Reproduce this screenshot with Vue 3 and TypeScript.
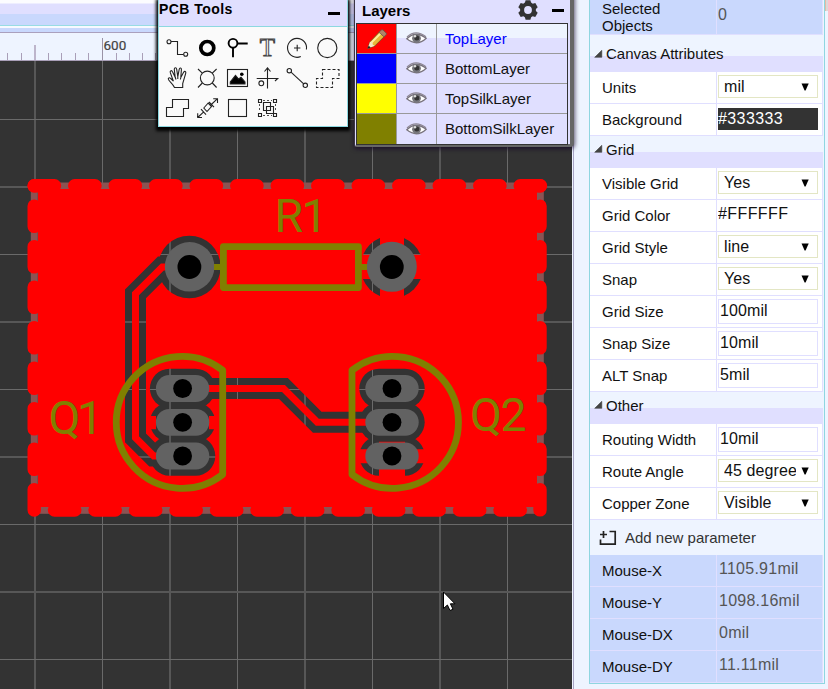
<script setup lang="ts">
type Row = {
  kind: 'select' | 'input' | 'color' | 'dark'
  label: string
  value: string
}
type Section = { title: string; tall?: boolean; rows: Row[] }

const sections: Section[] = [
  {
    title: 'Canvas Attributes',
    tall: true,
    rows: [
      { kind: 'select', label: 'Units', value: 'mil' },
      { kind: 'dark', label: 'Background', value: '#333333' },
    ],
  },
  {
    title: 'Grid',
    rows: [
      { kind: 'select', label: 'Visible Grid', value: 'Yes' },
      { kind: 'color', label: 'Grid Color', value: '#FFFFFF' },
      { kind: 'select', label: 'Grid Style', value: 'line' },
      { kind: 'select', label: 'Snap', value: 'Yes' },
      { kind: 'input', label: 'Grid Size', value: '100mil' },
      { kind: 'input', label: 'Snap Size', value: '10mil' },
      { kind: 'input', label: 'ALT Snap', value: '5mil' },
    ],
  },
  {
    title: 'Other',
    rows: [
      { kind: 'input', label: 'Routing Width', value: '10mil' },
      { kind: 'select', label: 'Route Angle', value: '45 degree' },
      { kind: 'select', label: 'Copper Zone', value: 'Visible' },
    ],
  },
]

const mouse = [
  { label: 'Mouse-X', value: '1105.91mil' },
  { label: 'Mouse-Y', value: '1098.16mil' },
  { label: 'Mouse-DX', value: '0mil' },
  { label: 'Mouse-DY', value: '11.11mil' },
]

const layers = [
  { name: 'TopLayer', cls: 'red', active: true },
  { name: 'BottomLayer', cls: 'blue', active: false },
  { name: 'TopSilkLayer', cls: 'yellow', active: false },
  { name: 'BottomSilkLayer', cls: 'olive', active: false },
]

const ticks = [7, 21, 48, 61, 75, 88, 116, 129, 142, 155]
const gridX = [
  { p: 34, w: 2 }, { p: 102, w: 1 }, { p: 169, w: 2 }, { p: 237, w: 1 },
  { p: 304, w: 2 }, { p: 372, w: 1 }, { p: 439, w: 2 }, { p: 507, w: 1 },
]
const gridY = [
  { p: 119, w: 1 }, { p: 186, w: 2 }, { p: 254, w: 1 }, { p: 321, w: 2 }, { p: 389, w: 1 },
  { p: 456, w: 2 }, { p: 524, w: 1 }, { p: 591, w: 2 }, { p: 659, w: 1 },
]
const padY = [388.5, 422.3, 456]
const padX = [182.6, 392]
const traces = [
  'M189 267H162.3L135.5 293.8V437.8L153.7 456H182',
  'M182 388.5H283.5L317.3 422.3H392',
]
</script>

<template>
  <main class="app">
    <section class="editor">
      <div class="strip-a"></div>
      <div class="strip-b"></div>
      <div class="strip-c"></div>
      <div class="strip-d"></div>
      <svg class="ruler" width="572" height="28" viewBox="0 33 572 28" shape-rendering="crispEdges">
        <rect v-for="t in ticks" :key="t" :x="t" y="53" width="1" height="7" fill="#a99fb8" />
        <rect x="34" y="45" width="2" height="15" fill="#bdb5cb" />
        <rect x="102" y="38" width="1" height="22" fill="#9a93a6" />
        <rect x="0" y="60" width="572" height="1" fill="#a99fb8" />
        <text class="ruler-text" x="103.5" y="49.5">600</text>
      </svg>
      <svg class="canvas" width="572" height="628" viewBox="0 61 572 628">
        <defs>
          <mask id="copper" maskUnits="userSpaceOnUse" x="0" y="61" width="572" height="628">
            <rect x="38" y="189" width="499" height="318" fill="#fff" />
            <circle cx="189.3" cy="267" r="31.3" fill="#000" />
            <circle cx="391.8" cy="267" r="31.3" fill="#000" />
            <template v-for="x in padX" :key="x">
              <rect v-for="y in padY" :key="y" :x="x - 32.7" :y="y - 19.7" width="65.4" height="39.4" rx="19.7" fill="#000" />
            </template>
            <path v-for="t in traces" :key="t" :d="t" fill="none" stroke="#000" stroke-width="21" />
            <path v-for="t in traces" :key="'w' + t" :d="t" fill="none" stroke="#fff" stroke-width="7" />
            <path d="M380 234H404V300H380ZM358 254.7H426V279H358ZM149 416H156V429.3H149ZM209 416H217V429.3H209ZM358 449.3H427V463.3H358ZM379 441.7H405V443H379ZM379 468H405V477H379Z" fill="#fff" />
          </mask>
        </defs>
        <rect x="0" y="61" width="572" height="628" fill="#333" />
        <g shape-rendering="crispEdges">
          <rect v-for="g in gridX" :key="g.p" :x="g.p" y="61" :width="g.w" height="628" :fill="g.w === 1 ? '#6a6a6a' : '#575757'" />
          <rect v-for="g in gridY" :key="g.p" x="0" :y="g.p" width="572" :height="g.w" :fill="g.w === 1 ? '#6a6a6a' : '#575757'" />
        </g>
        <rect x="34.3" y="186" width="506" height="324.3" fill="none" stroke="#8b5353" stroke-width="7" />
        <rect x="0" y="61" width="572" height="628" fill="#f00" mask="url(#copper)" />
        <g fill="none" stroke="#f00" stroke-width="13.4" stroke-linecap="round" stroke-dasharray="20.3 20.2">
          <path d="M34.2 185.8H540.5" />
          <path d="M34.2 510H540.3M34.2 185.8V510M540 185.8V510" stroke-dashoffset="20.2" />
        </g>
        <g fill="#626262">
          <circle cx="189.6" cy="266.8" r="24.8" />
          <circle cx="391.8" cy="266.8" r="25" />
          <template v-for="x in padX" :key="x">
            <rect v-for="y in padY" :key="y" :x="x - 26.7" :y="y - 13.4" width="53.4" height="26.8" rx="13.4" />
          </template>
        </g>
        <circle cx="189.4" cy="267" r="11.9" />
        <circle cx="391.8" cy="267" r="11.9" />
        <template v-for="x in padX" :key="'h' + x">
          <circle v-for="y in padY" :key="y" :cx="x" :cy="y" r="9.4" />
        </template>
        <g fill="none" stroke="#808000" stroke-width="6.8" stroke-linejoin="round" stroke-linecap="round">
          <rect x="223.4" y="246.6" width="135" height="41" />
          <path d="M222.7 370.2A66 66 0 1 0 222.7 474.5Z" />
          <path d="M352 370.2A66 66 0 1 1 352 474.5Z" />
        </g>
        <path d="M214 264H221V270H214ZM361 264H367V270H361Z" fill="#808000" />
        <g class="silk">
          <text x="274.5 301.5" y="232">R1</text>
          <text x="48.5 77" y="433.5">Q1</text>
          <text x="470 500.5" y="431">Q2</text>
        </g>
        <path d="M443.5 592V608.5L447.4 605L450 610.5L453 609.2L450.4 603.8H455Z" fill="#fff" stroke="#000" />
      </svg>
    </section>

    <aside class="side">
      <div class="props">
        <div class="row selected">
          <div class="name">Selected Objects</div>
          <div class="value muted">0</div>
        </div>
        <template v-for="s in sections" :key="s.title">
          <h3 class="section" :class="{ tall: s.tall }">
            <svg width="9" height="8" viewBox="0 0 9 8"><path d="M7.8 .3V7.3H.7Z" fill="#444" stroke="#444" stroke-width=".6" /></svg>
            <span>{{ s.title }}</span>
          </h3>
          <div v-for="r in s.rows" :key="r.label" class="row">
            <div class="name">{{ r.label }}</div>
            <div class="value">
              <div class="field" :class="r.kind">
                <span>{{ r.value }}</span>
                <svg v-if="r.kind === 'select'" width="8" height="8" viewBox="0 0 8 8"><path d="M.5 .5H7.7L4.6 7.5H3.6Z" /></svg>
              </div>
            </div>
          </div>
        </template>
        <div class="add">
          <svg width="18" height="16" viewBox="0 0 18 16" fill="none" stroke="#222" stroke-width="1.7">
            <path d="M1 4.5H8M4.5 1V8M10.5 1.5H16.2V14.2H1.5V9.5" />
          </svg>
          <span>Add new parameter</span>
        </div>
        <div v-for="m in mouse" :key="m.label" class="row blue-row">
          <div class="name">{{ m.label }}</div>
          <div class="value muted">{{ m.value }}</div>
        </div>
      </div>
      <div class="thumb"></div>
    </aside>

    <section class="tools">
      <header><b>PCB Tools</b><i class="min"></i></header>
      <div class="icons">
        <svg viewBox="0 0 30 30"><circle cx="7" cy="8.7" r="2" /><path d="M9 8.5H15.5V21.5H21.5" /><circle cx="23.7" cy="21.3" r="2" /></svg>
        <svg viewBox="0 0 30 30"><circle cx="15.3" cy="15" r="6.5" stroke-width="3.7" stroke="#000" /></svg>
        <svg viewBox="0 0 30 30"><g stroke-width="1.9" stroke="#000"><circle cx="11" cy="10.3" r="4.4" /><path d="M15.5 10.5H25.7M11 14.8V24.2" /></g></svg>
        <svg viewBox="0 0 30 30"><text class="t-glyph" x="15.5" y="23.3" text-anchor="middle">T</text></svg>
        <svg viewBox="0 0 30 30"><path d="M18.8 23.6A9.5 9.5 0 1 1 24.4 16.5M12 15H18.4M15.2 11.8V18.2" /></svg>
        <svg viewBox="0 0 30 30"><circle cx="15.3" cy="15" r="9.6" /></svg>

        <svg viewBox="0 0 30 30"><path d="M12.5 24.5C10.5 20.5 8.2 19.5 6.6 16.8C5.6 15 7.4 14.1 8.7 15.5L11.4 18.2L8.3 9.7C7.7 7.5 9.7 6.8 10.5 8.8L13.2 14.3L12.3 6.5C12.2 4.2 14.4 4.2 14.7 6.3L15.8 13.7L17.2 6.3C17.7 4.3 19.6 4.8 19.4 6.8L18.8 14.4L21.6 9.2C22.7 7.5 24.3 8.6 23.7 10.3L20.7 20.5V24.5ZM13.2 14.3L14 16.5M15.8 13.7V16M18.8 14.4L18.4 16.5" /></svg>
        <svg viewBox="0 0 30 30"><circle cx="15.3" cy="15" r="6.9" /><path d="M6 6L10.3 10.2M24.6 6L20.3 10.2M6 24.5L10.3 20M24.6 24.5L20.3 20" /></svg>
        <svg viewBox="0 0 30 30"><rect x="5.5" y="6.5" width="20" height="17" /><path d="M8.3 21V19L13.5 12.3L16.6 16L19 14.3L23 19V21Z" fill="#000" /><circle cx="19.8" cy="11.3" r="1.8" fill="#000" stroke="none" /></svg>
        <svg viewBox="0 0 30 30"><path d="M15.5 25.5V5M12.5 8.5L15.5 4.8L18.5 8.5M4.7 15.5H25.7L23 18" /><circle cx="9.3" cy="20.3" r="2.4" /></svg>
        <svg viewBox="0 0 30 30"><circle cx="7.3" cy="7.7" r="2.2" /><path d="M9 9.2L21.7 20.8" /><circle cx="23.3" cy="22.3" r="2.2" /></svg>
        <svg viewBox="0 0 30 30"><path d="M10.5 6.5H27V15.5H20.5V24.5H4.5V15.5H10.5Z" stroke-dasharray="3 2" /></svg>

        <svg viewBox="0 0 30 30"><path d="M10.5 6.5H26.5V15.5H21.5V23.5H4.5V14.5H10.5Z" /></svg>
        <svg viewBox="0 0 30 30"><path d="M5.7 24.5L12 18.7M18.8 12L25.5 5.7M21.2 5.7H25.5V10M5.7 20.2V24.5H10M9 16.2L14 21.7M17 9L22 14.2M11.8 15L16.2 10L19.5 13.5L15 18.5Z" /></svg>
        <svg viewBox="0 0 30 30"><rect x="6.5" y="6.5" width="18" height="17" /></svg>
        <svg viewBox="0 0 30 30"><path d="M6.5 6.5H9.5V9.5H6.5ZM21.5 6.5H24.5V9.5H21.5ZM6.5 20.5H9.5V23.5H6.5ZM21.5 20.5H24.5V23.5H21.5ZM11.5 9.5H18.5V17.5H11.5ZM14.5 13.5H21.5V20.5H14.5Z" /><path d="M11 7.5H20M7.5 11V19M23.5 11V19M11 22.5H20" stroke-dasharray="2 2" stroke-width=".8" /></svg>
      </div>
    </section>

    <section class="layers">
      <header>
        <b>Layers</b>
        <svg class="gear" width="20" height="20" viewBox="-10 -10 20 20">
          <circle r="5.9" fill="none" stroke="#333" stroke-width="4" />
          <g fill="#333">
            <path v-for="a in [0, 60, 120, 180, 240, 300]" :key="a" d="M-3.4 -6.3L-2.4 -9.8H2.4L3.4 -6.3Z" :transform="`rotate(${a})`" />
          </g>
        </svg>
        <i class="min"></i>
      </header>
      <div class="table">
        <div v-for="l in layers" :key="l.name" class="layer" :class="{ active: l.active }">
          <div class="swatch" :class="l.cls">
            <svg v-if="l.active" width="20" height="20" viewBox="0 0 20 20">
              <path d="M.7 19.5L3 12.8L13 2.3L18 6.8L8 16.8Z" fill="#e8b93a" stroke="#6e4a1c" stroke-width=".8" />
              <path d="M4.5 13.5L14 4" stroke="#fff09a" stroke-width="1.8" />
              <path d="M3 12.8L.7 19.5L8 16.8L5.8 15.8L5.5 13.6Z" fill="#f7e6c0" />
              <path d="M.5 19.8L1.6 16.7L3.8 18.6Z" fill="#222" />
              <path d="M12 3.3L14.3 .9Q15 .3 16 1L19.2 4Q19.8 5 19.2 5.7L17 7.8Z" fill="#b08468" stroke="#6f5140" stroke-width=".8" />
            </svg>
          </div>
          <div class="eye">
            <svg width="21" height="15" viewBox="0 0 21 15">
              <path d="M.8 7.8Q9.5 -1 20.2 7.2Q11 16 .8 7.8Z" fill="#fff" stroke="#77727b" stroke-width="1.3" />
              <circle cx="10.5" cy="7.3" r="4.4" fill="#77777c" />
              <circle cx="10.8" cy="7" r="2.5" fill="#333" />
              <circle cx="9" cy="5.2" r="1.2" fill="#ddd" />
              <path d="M1 6Q9.5 -2 20 5.8" fill="none" stroke="#8d8794" stroke-width="1.2" />
            </svg>
          </div>
          <div class="lname">{{ l.name }}</div>
        </div>
      </div>
    </section>
  </main>
</template>

<style>
body { overflow: hidden; background: #eef4ff; }
</style>

<style scoped>
* { box-sizing: border-box; }
.app { position: relative; display: flex; width: 828px; height: 689px; overflow: hidden; font-family: "Liberation Sans", Arial, sans-serif; font-size: 15px; color: #111; background: #eef4ff; }
.editor { display: flex; flex-direction: column; width: 574px; flex: none; border-right: 1px solid #a9a5c6; background: #eef4ff; }
.strip-a { height: 14px; background: linear-gradient(#fcfcff 0 3px, #e0dfff 4px); }
.strip-b { height: 12px; background: #c9d8fd; border-bottom: 1px solid #98dce4; }
.strip-c { height: 2px; background: #f6faff; }
.strip-d { height: 5px; background: #c9d8fd; border-bottom: 1px solid #aaa0bd; }
.ruler, .canvas { display: block; flex: none; }
.ruler-text { font: 13.5px Roboto, sans-serif; fill: #444; stroke: #444; stroke-width: .2; }
.silk { font: 46.5px Roboto, sans-serif; fill: #808000; }

.side { position: relative; flex: 1; padding-left: 15px; }
.props { width: 236px; height: 684px; border: 1px solid #8fd6e0; border-top: 0; padding-right: 1px; background: #eef4ff; }
.row { display: flex; height: 32px; background: #fff; border-bottom: 1px solid #e0dfff; border-right: 1px solid #e0dfff; }
.name { width: 127px; flex: none; padding-left: 12px; line-height: 32px; border-right: 1px solid #e0dfff; }
.value { padding: 3px 0 0 1px; flex: 1; font-size: 16px; letter-spacing: .1px; }
.muted { color: #555; padding-left: 2px; padding-top: 0; line-height: 28px; letter-spacing: .25px; }
.blue-row, .selected { background: #c9d8fd; }
.blue-row .name { line-height: 31px; }
.selected { height: 35px; }
.selected .muted { padding-left: 1px; line-height: 30px; }
.selected .name { line-height: 17px; padding-right: 30px; }
.section { margin: 0; height: 32px; display: flex; align-items: center; gap: 3px; padding: 0 0 6px 4px; font-size: 15px; font-weight: 400; background: linear-gradient(#eef4ff 50%, #e0dfff 50%); }
.section.tall { height: 37px; padding-bottom: 0; background: linear-gradient(#eef4ff 21px, #e0dfff 21px); }
.section svg { margin-top: 0; }
.field { width: 100px; display: flex; align-items: center; overflow: hidden; white-space: nowrap; line-height: 20px; }
.select { height: 23px; border: 1px solid #e3e6c4; padding: 0 8px 0 5px; justify-content: space-between; }
.select span { width: 72px; overflow: hidden; flex: none; }
.input { height: 25px; border: 1px solid #e0dfff; padding: 0 0 2px 1px; }
.dark { height: 22px; margin-top: 1px; background: #333; color: #fff; padding-bottom: 1px; letter-spacing: .4px; }
.color { height: 22px; letter-spacing: .4px; }
.add { height: 35px; display: flex; align-items: center; gap: 8px; padding-left: 9px; color: #333; }
.thumb { position: absolute; right: 0; top: 0; width: 3px; height: 11px; background: #ddd8d8; border-left: 1px solid #e5bba5; }

.tools { position: absolute; left: 158px; top: -1px; width: 190px; height: 128px; border: 1px solid #8dd8e0; background: #fafafa; box-shadow: 0 2px 3px 2px #000; }
.tools header { height: 27px; background: #e0dfff; border-bottom: 1px solid #8dd8e0; display: flex; justify-content: space-between; padding: 1px 7px 0 0; font-size: 14px; letter-spacing: .45px; color: #000; }
.min { width: 12px; height: 3px; background: #000; margin-top: 11px; }
.icons { display: grid; grid-template-columns: repeat(6, 30px); grid-auto-rows: 30px; padding: 6px 0 0 3px; }
.icons svg { width: 30px; height: 30px; fill: none; stroke: #222; stroke-width: 1.1; }
.t-glyph { font: 25px "Liberation Serif", serif; stroke: #444; stroke-width: 1; fill: #fafafa; }
.icons svg .t-glyph { stroke-width: 1; }

.layers { position: absolute; left: 355px; top: -4px; width: 219px; height: 151px; background: #e0dfff; border: 1px solid #e0dfff; border-right: 4px solid #666; border-bottom: 3px solid #666; border-radius: 0 0 4px 2px; box-shadow: 0 1px 4px 1px rgba(20, 0, 40, .65), -1px 0 0 #555; padding-right: 2px; }
.layers header { height: 26px; display: flex; padding: 5px 4px 0 6px; font-size: 15px; color: #000; }
.layers header b { flex: 1; line-height: 18px; }
.gear { margin: -2px 14px 0 0; }
.layers .min { margin-top: 7px; }
.table { border: 1px solid #333; height: 122px; width: 212px; }
.layer { display: flex; height: 30px; border-bottom: 1px solid #999; }
.layer:last-child { border-bottom: 0; }
.layer.active { background: linear-gradient(#eef4ff 50%, #e0dfff 50%); }
.swatch, .eye { width: 40px; flex: none; border-right: 1px solid #999; display: flex; align-items: center; justify-content: center; }
.red { background: #f00; }
.blue { background: #00f; }
.yellow { background: #ff0; }
.olive { background: #808000; }
.lname { padding-left: 8px; line-height: 30px; }
.active .lname { color: #00f; }
</style>
